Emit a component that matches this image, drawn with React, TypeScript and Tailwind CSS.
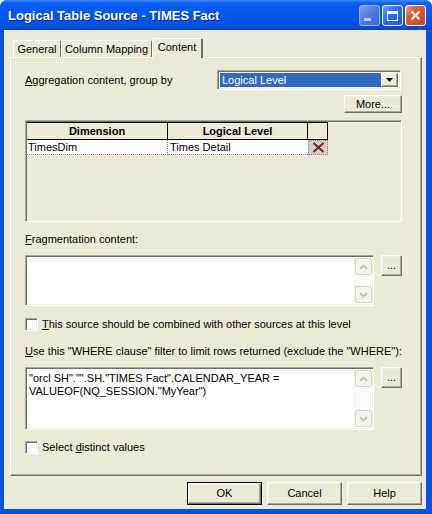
import React from "react";

// classic 3D borders used by the controls in this dialog
const raised =
  "border border-t-white border-l-white border-r-[#716F64] border-b-[#716F64] shadow-[inset_-1px_-1px_0_#ACA899,inset_1px_1px_0_#F1EFE2]";
const sunken =
  "border border-t-[#ACA899] border-l-[#ACA899] border-r-white border-b-white shadow-[inset_1px_1px_0_#716F64,inset_-1px_-1px_0_#F1EFE2]";

function Btn({ children, className = "", def = false }: { children: React.ReactNode; className?: string; def?: boolean }) {
  if (def) {
    return (
      <div className={`border border-black bg-[#ECE9D8] ${className}`}>
        <div className={`${raised} h-full w-full flex items-center justify-center`}>{children}</div>
      </div>
    );
  }
  return <div className={`${raised} bg-[#ECE9D8] flex items-center justify-center ${className}`}>{children}</div>;
}

function ScrollBar() {
  return (
    <div className="w-[17px] h-full flex flex-col justify-between bg-[#FBFBF8] border-l border-[#F3F1EA]">
      <div className="h-[17px] w-[17px] rounded-[2px] border border-[#D9D6C9] bg-[#F4F3EE] flex items-center justify-center">
        <svg width="9" height="6" viewBox="0 0 9 6">
          <path d="M1 5 L4.5 1.5 L8 5" fill="none" stroke="#C6C4B6" strokeWidth="2" />
        </svg>
      </div>
      <div className="h-[17px] w-[17px] rounded-[2px] border border-[#D9D6C9] bg-[#F4F3EE] flex items-center justify-center">
        <svg width="9" height="6" viewBox="0 0 9 6">
          <path d="M1 1 L4.5 4.5 L8 1" fill="none" stroke="#C6C4B6" strokeWidth="2" />
        </svg>
      </div>
    </div>
  );
}

function Check({ children }: { children: React.ReactNode }) {
  return (
    <div className="flex items-center h-[13px]">
      <div className={`${sunken} w-[13px] h-[13px] bg-white`} />
      <span className="ml-[4px]">{children}</span>
    </div>
  );
}

function TitleButton({ kind }: { kind: "min" | "max" | "close" }) {
  if (kind === "close") {
    return (
      <div className="w-[21px] h-[21px] rounded-[3px] border border-white bg-[linear-gradient(135deg,#F0A08A_0%,#E05B36_35%,#C8421C_100%)] flex items-center justify-center">
        <svg width="11" height="11" viewBox="0 0 11 11">
          <path d="M1.5 1.5 L9.5 9.5 M9.5 1.5 L1.5 9.5" stroke="white" strokeWidth="2" />
        </svg>
      </div>
    );
  }
  return (
    <div
      className={`w-[21px] h-[21px] rounded-[3px] border flex items-center justify-center ${
        kind === "min"
          ? "border-[#9BB8F0] bg-[linear-gradient(135deg,#7DA2F0_0%,#4D7BE0_50%,#3A66D6_100%)]"
          : "border-white bg-[linear-gradient(135deg,#6D9CFF_0%,#2F6DF0_45%,#1E56DE_100%)]"
      }`}
    >
      {kind === "min" ? (
        <div className="w-[7px] h-[3px] bg-[#B9CCF4] mt-[8px] mr-[4px]" />
      ) : (
        <div className="w-[11px] h-[10px] border border-white border-t-[3px]" />
      )}
    </div>
  );
}

export default function App() {
  return (
    <div className="w-[432px] h-[514px] flex flex-col bg-[#0054E3] rounded-t-[7px] font-['Liberation_Sans',Arial,sans-serif] text-[11px] leading-[13px] text-black overflow-hidden">
      {/* Title bar */}
      <div className="h-[30px] shrink-0 flex items-center pl-[8px] pr-[6px] bg-[linear-gradient(to_bottom,#3C8CFF_0%,#0A5EF5_10%,#0057EC_45%,#0052E3_80%,#0043C8_100%)]">
        <span className="text-white font-bold text-[13px] [text-shadow:1px_1px_0_#0A2B86]">Logical Table Source - TIMES Fact</span>
        <div className="ml-auto flex gap-[2px] mt-[1px]">
          <TitleButton kind="min" />
          <TitleButton kind="max" />
          <TitleButton kind="close" />
        </div>
      </div>

      {/* Body */}
      <div className="flex-1 ml-[4px] mr-[6px] mb-[5px] bg-[#ECE9D8] flex flex-col">
        {/* Tabs */}
        <div className="mt-[8px] pl-[9px] h-[19px] flex items-end relative z-10">
          <div className="h-[17px] w-[48px] border-t border-l border-white border-r border-r-[#716F64] rounded-t-[2px] flex items-center justify-center">
            General
          </div>
          <div className="h-[17px] w-[91px] border-t border-l border-white border-r border-r-[#716F64] rounded-t-[2px] flex items-center justify-center">
            Column Mapping
          </div>
          <div className="h-[20px] w-[51px] -mb-[1px] bg-[#ECE9D8] border-t border-l border-white border-r-2 border-r-[#716F64] rounded-t-[2px] flex items-center justify-center pb-[2px]">
            Content
          </div>
        </div>

        {/* Tab panel */}
        <div className="ml-[6px] w-[412px] h-[419px] border border-t-white border-l-white border-r-[#716F64] border-b-[#716F64] shadow-[inset_-1px_-1px_0_#ACA899] pl-[14px] pr-[19px] flex flex-col">
          <div className="mt-[12px] h-[20px] flex items-center">
            <span>
              <span className="underline">A</span>ggregation content, group by
            </span>
            <div className={`${sunken} ml-auto mr-[1px] w-[184px] h-[20px] bg-white flex items-stretch p-[2px]`}>
              <div className="flex-1 bg-[#316AC5] text-white flex items-center pl-[2px]">Logical Level</div>
              <div className={`${raised} w-[17px] bg-[#ECE9D8] flex items-center justify-center`}>
                <svg width="7" height="4" viewBox="0 0 7 4">
                  <path d="M0 0 H7 L3.5 4 Z" fill="black" />
                </svg>
              </div>
            </div>
          </div>

          <div className="mt-[5px] flex justify-end">
            <Btn className="w-[58px] h-[18px]">More...</Btn>
          </div>

          {/* Dimension grid */}
          <div className={`${sunken} mt-[7px] h-[102px] bg-[#ECE9D8] p-[1px]`}>
            <div className="flex h-[17px] border-t border-black w-[301px]">
              <div className="w-[141px] border-r border-black font-bold text-center flex items-center justify-center">Dimension</div>
              <div className="w-[140px] border-r border-black font-bold flex items-center justify-center">Logical Level</div>
              <div className="w-[20px] border-r border-black" />
            </div>
            <div className="flex h-[16px] w-[301px] border-t border-black">
              <div className="w-[141px] bg-white border-r border-dotted border-r-[#808080] border-b border-b-[#808080] flex items-center pl-[1px]">
                TimesDim
              </div>
              <div className="w-[140px] bg-white border-b border-dotted border-b-[#808080] flex items-center pl-[2px]">
                Times Detail
              </div>
              <div className="w-[20px] bg-[#D4D0C8] border border-dotted border-[#808080] flex items-center justify-center">
                <svg width="13" height="11" viewBox="0 0 13 11">
                  <path d="M1.5 1 L11.5 10 M11.5 1 L1.5 10" stroke="#8E1A1A" strokeWidth="2" />
                </svg>
              </div>
            </div>
          </div>

          <div className="mt-[11px]">
            <span className="underline">F</span>ragmentation content:
          </div>
          <div className="mt-[9px] flex items-start gap-[7px]">
            <div className={`${sunken} w-[350px] h-[51px] bg-white flex justify-end p-[2px]`}>
              <ScrollBar />
            </div>
            <Btn className="w-[21px] h-[21px]">...</Btn>
          </div>

          <div className="mt-[12px]">
            <Check>
              <span className="underline">T</span>his source should be combined with other sources at this level
            </Check>
          </div>

          <div className="mt-[14px]">
            <span className="underline">U</span>se this "WHERE clause" filter to limit rows returned (exclude the "WHERE"):
          </div>
          <div className="mt-[9px] flex items-start gap-[7px]">
            <div className={`${sunken} w-[350px] h-[63px] bg-white flex p-[2px]`}>
              <div className="flex-1 pl-[1px] pt-[2px]">
                "orcl SH"."".SH."TIMES Fact".CALENDAR_YEAR =
                <br />
                VALUEOF(NQ_SESSION."MyYear")
              </div>
              <ScrollBar />
            </div>
            <Btn className="w-[21px] h-[21px]">...</Btn>
          </div>

          <div className="mt-[11px]">
            <Check>
              Select <span className="underline">d</span>istinct values
            </Check>
          </div>
        </div>

        {/* Dialog buttons */}
        <div className="mt-[6px] pr-[4px] flex justify-end gap-[5px]">
          <Btn def className="w-[75px] h-[23px]">OK</Btn>
          <Btn className="w-[75px] h-[23px]">Cancel</Btn>
          <Btn className="w-[75px] h-[23px]">Help</Btn>
        </div>
      </div>
    </div>
  );
}
